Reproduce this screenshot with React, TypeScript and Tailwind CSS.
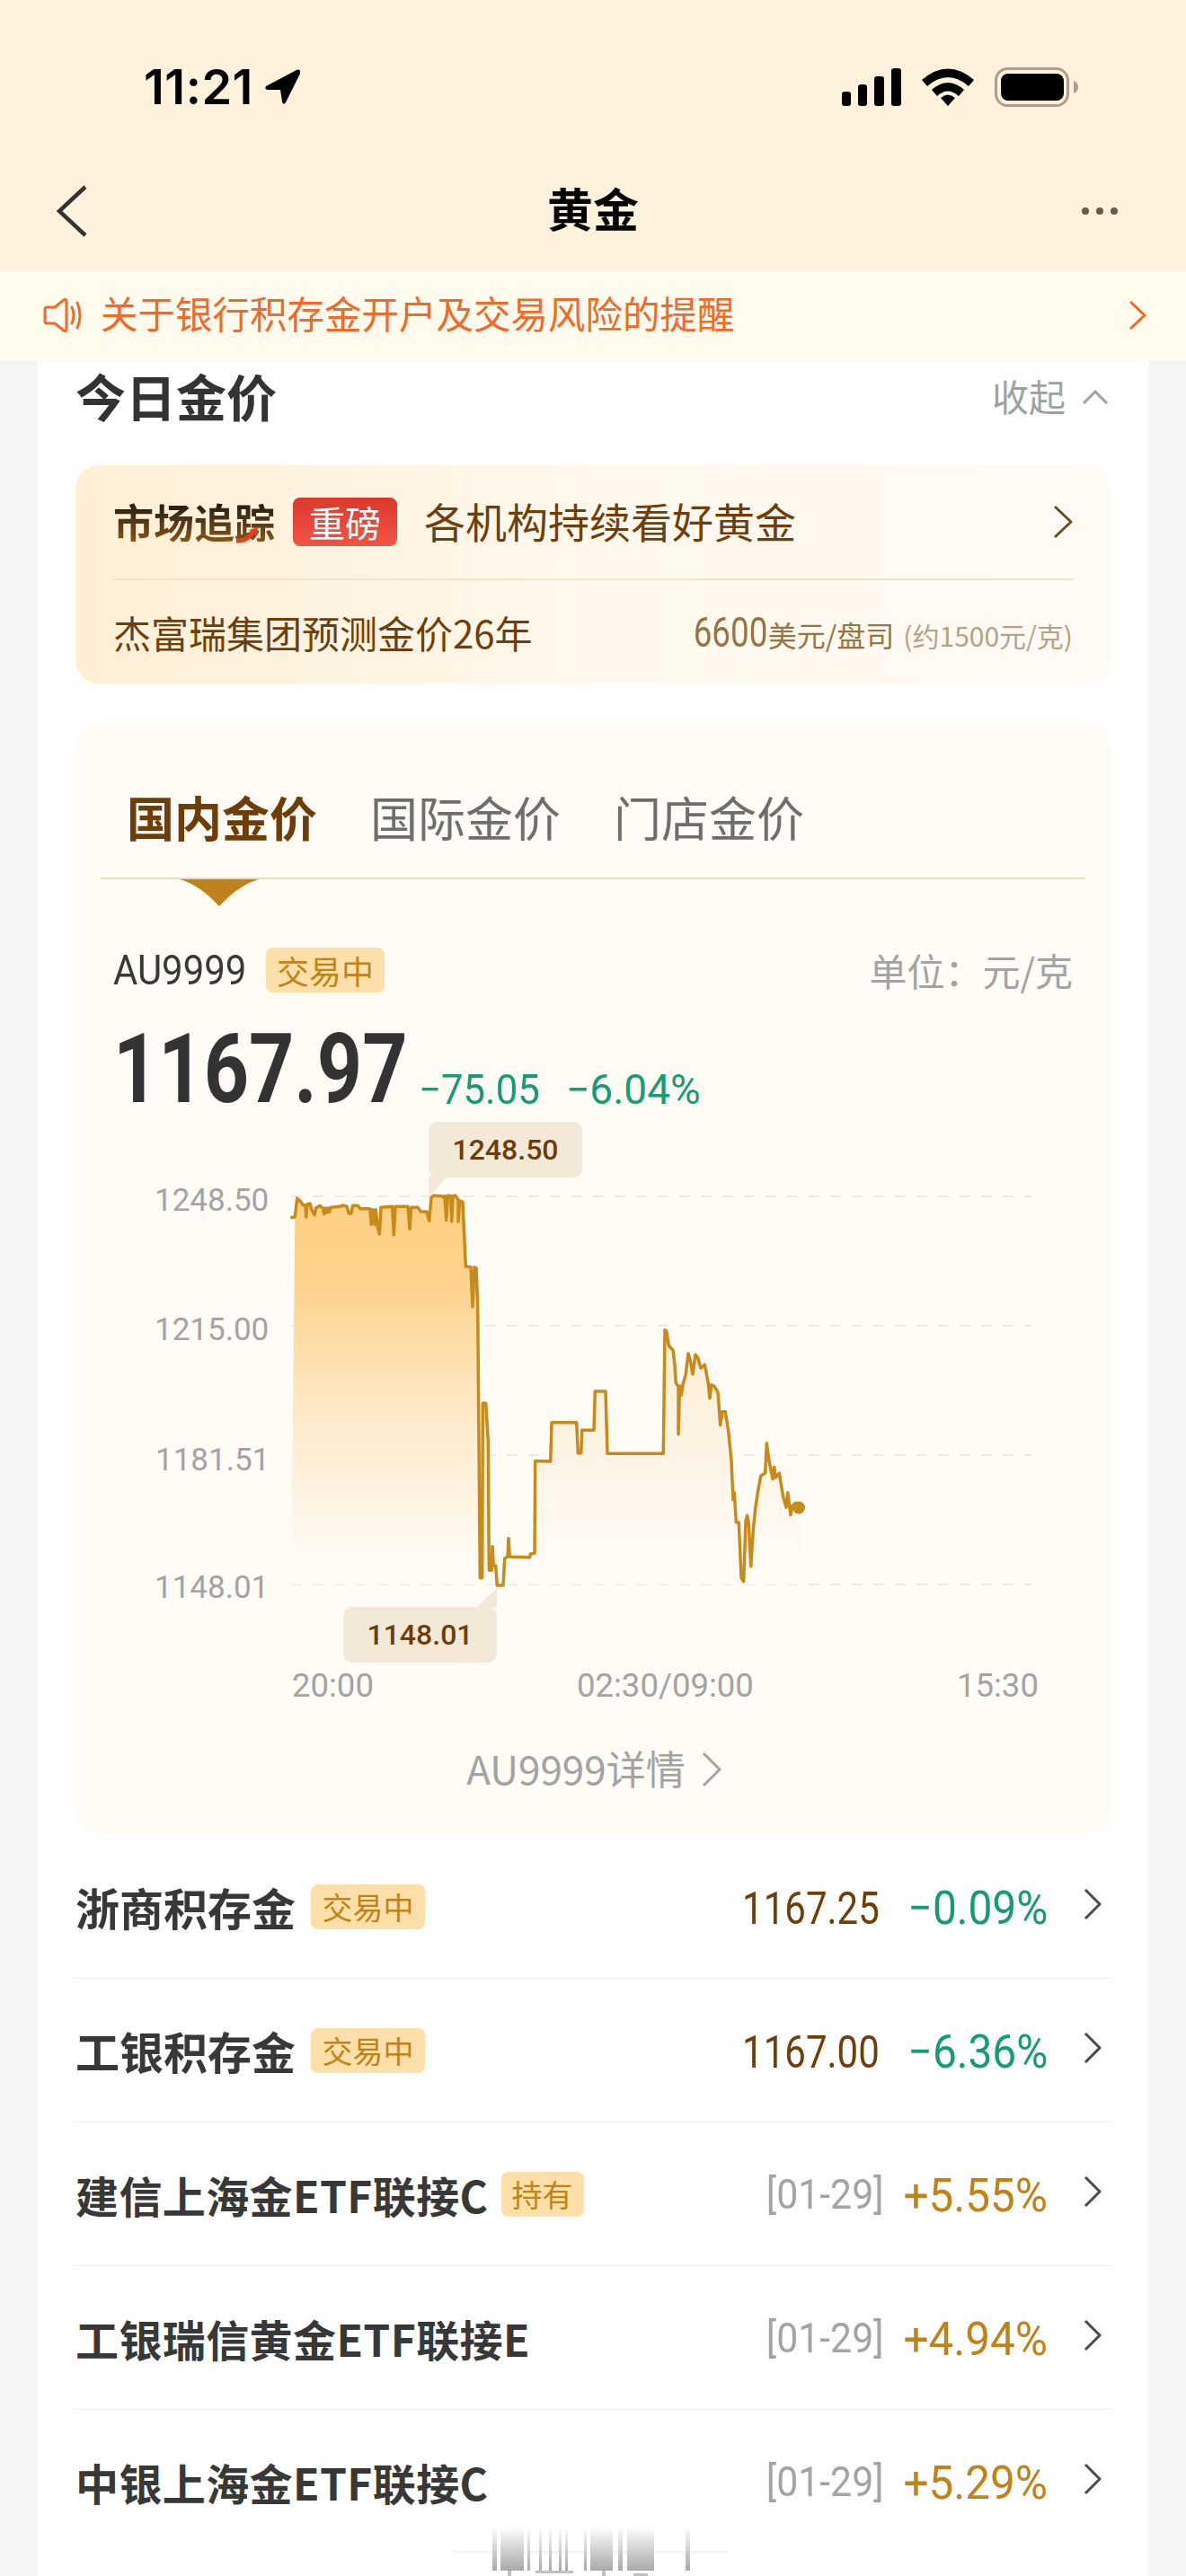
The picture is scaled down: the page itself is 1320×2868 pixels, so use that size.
import React from "react";

const cjk = "font-['Noto_Sans_CJK_SC','Noto_Sans',sans-serif]";
const num = "font-['Roboto','Noto_Sans_CJK_SC',sans-serif]";

const z5: number[][] = [[70,167],[85,165],[92,102],[105,115],[112,125],[120,125],[122,165],[126,122],[135,120],[140,140],[150,158],[155,135],[168,127],[178,135],[182,155],[186,135],[190,150],[195,135],[200,148],[205,133],[235,130],[245,126],[258,130],[265,153],[272,153],[278,127],[295,127],[303,137],[335,137],[340,190],[345,140],[352,190],[355,140],[360,195],[367,222],[372,133],[410,130],[415,225],[420,130],[462,130],[468,205],[473,133],[495,133],[505,147],[525,147],[533,178],[540,100],[548,93],[575,95],[582,100],[585,95],[590,175],[595,93],[605,95],[608,180],[612,95],[620,93],[630,108],[630,180],[635,110],[645,115],[655,330],[672,332],[678,465],[684,332],[690,335],[695,465]];
const z5b: number[][] = [[703,1370],[710,1370],[712,787],[722,787],[730,915],[733,1345],[742,1345],[744,1265],[748,1330],[755,1330],[760,1395],[780,1395],[785,1305],[795,1300],[798,1238],[802,1300],[868,1302],[872,1290],[885,1288],[887,980],[900,980]];
const z6: number[][] = [[38,561],[42,431],[125,431],[130,533],[140,533],[143,457],[183,457],[187,327],[222,327],[228,535],[415,535],[420,122],[425,125],[433,175],[447,190],[452,230],[457,300],[465,310],[465,470],[470,310],[475,340],[480,305],[490,270],[498,200],[505,225],[513,270],[522,205],[530,215],[540,250],[553,238],[565,300],[570,350],[575,305],[585,310],[597,330],[605,440],[612,395],[622,395],[632,460],[642,560],[648,690],[652,665],[658,765],[667,765],[675,950],[683,962],[690,760],[695,742],[700,770],[707,912],[715,790],[722,720],[730,665],[740,610],[755,600],[760,500],[768,560],[780,620],[785,580],[790,615],[802,600],[815,680],[825,715],[830,665],[840,740],[845,710],[857,700],[870,715]];

const fromZ5 = (p: number[]) => `${(300 + p[0] / 3).toFixed(1)},${(1300 + p[1] / 3).toFixed(1)}`;
const fromZ6 = (p: number[]) => `${(600 + p[0] / 3).toFixed(1)},${(1440 + p[1] / 3).toFixed(1)}`;
const partA = z5.map(fromZ5);
const partB = [...z5b.map(fromZ5), ...z6.map(fromZ6)];
const line = [...partA, ...partB].join(" ");
const areaA = `324,1764 ${partA.slice(1).join(" ")} 532,1764`;
const areaB = `535,1764 ${partB.join(" ")} 890,1764`;

function Chevron({ w = 20, h = 36, color = "#4a4a4a", sw = 3 }: { w?: number; h?: number; color?: string; sw?: number }) {
  return (
    <svg width={w} height={h} viewBox={`0 0 ${w} ${h}`} fill="none" className="shrink-0">
      <polyline points={`2,2 ${w - 2},${h / 2} 2,${h - 2}`} stroke={color} strokeWidth={sw} strokeLinejoin="round" />
    </svg>
  );
}

type RowData = { name: string; nameCls: string; tag?: string; tagCls?: string; left: string; right: string; color: string; date?: boolean };
const tagTrade = "ml-[17px] w-[127px]";
const rows: RowData[] = [
  { name: "浙商积存金", nameCls: "text-[49px]", tag: "交易中", tagCls: tagTrade, left: "1167.25", right: "−0.09%", color: "text-[#159c76] scale-x-[0.92]" },
  { name: "工银积存金", nameCls: "text-[49px]", tag: "交易中", tagCls: tagTrade, left: "1167.00", right: "−6.36%", color: "text-[#159c76] scale-x-[0.92]" },
  { name: "建信上海金ETF联接C", nameCls: "text-[48px] tracking-[0.4px]", tag: "持有", tagCls: "ml-[14px] w-[92px]", left: "[01-29]", right: "+5.55%", color: "text-[#c0831a] scale-x-[0.95]", date: true },
  { name: "工银瑞信黄金ETF联接E", nameCls: "text-[48px] tracking-[0.4px]", left: "[01-29]", right: "+4.94%", color: "text-[#c0831a] scale-x-[0.95]", date: true },
  { name: "中银上海金ETF联接C", nameCls: "text-[48px] tracking-[0.4px]", left: "[01-29]", right: "+5.29%", color: "text-[#c0831a] scale-x-[0.95]", date: true },
];

function Row({ r, last }: { r: RowData; last: boolean }) {
  return (
    <div className={`flex h-[160px] items-center ${last ? "" : "border-b border-[#efefef]"}`}>
      <span className={`${r.nameCls} font-bold leading-none text-[#383838]`}>{r.name}</span>
      {r.tag && (
        <span className={`${r.tagCls} flex h-[50px] items-center justify-center rounded-[8px] bg-[#fddfa9] text-[34px] leading-none text-[#c0831a]`}>
          {r.tag}
        </span>
      )}
      <span className="flex-1" />
      {r.date ? (
        <span className={`${num} mr-[-5px] inline-block origin-right scale-x-[0.93] text-[46px] leading-none text-[#a3a3a3]`}>{r.left}</span>
      ) : (
        <span className={`${num} mt-[5px] inline-block origin-right scale-x-[0.84] text-[50px] leading-none text-[#6e3f0c]`}>{r.left}</span>
      )}
      <span className="ml-[18px] mt-[4px] w-[160px] text-right">
        <span className={`${num} ${r.color} inline-block origin-right text-[52px] leading-none`}>{r.right}</span>
      </span>
      <span className="ml-[49px] mr-[10px] -mt-[6px]"><Chevron /></span>
    </div>
  );
}

export default function App() {
  return (
    <div className={`${cjk} relative h-[2868px] w-[1320px] overflow-hidden bg-[#f6f6f6]`}>
      {/* Header */}
      <div className="h-[302px] bg-[#fef2dd]">
        <div className="flex h-[194px] items-center justify-between pl-[160px] pr-[120px]">
          <div className="flex items-center">
            <span className="font-['Inter',sans-serif] text-[54px] font-semibold leading-none tracking-[0.5px] text-black">11:21</span>
            <svg width="42" height="42" viewBox="0 0 42 42" className="ml-[12px]">
              <path d="M2 20 L36 2 Q41 0 40 6 L24 38 Q21 42 20 37 L18 24 L4 24 Q0 23 2 20Z" fill="#000" />
            </svg>
          </div>
          <div className="flex items-center">
            <svg width="66" height="42" viewBox="0 0 66 42">
              <rect x="0" y="26" width="10" height="16" rx="3" fill="#000" />
              <rect x="18" y="18" width="10" height="24" rx="3" fill="#000" />
              <rect x="36" y="9" width="11" height="33" rx="3" fill="#000" />
              <rect x="55" y="0" width="11" height="42" rx="3" fill="#000" />
            </svg>
            <svg width="58" height="42" viewBox="0 0 58 42" className="ml-[23px]">
              <path d="M0 13 Q29 -12 58 13 L52 20 Q29 0 6 20Z" fill="#000" />
              <path d="M11 24 Q29 8 47 24 L41 31 Q29 20 17 31Z" fill="#000" />
              <path d="M21 33 Q29 26 37 33 L29 42Z" fill="#000" />
            </svg>
            <svg width="93" height="44" viewBox="0 0 93 44" className="ml-[23px]">
              <rect x="1.5" y="1.5" width="80" height="41" rx="13" fill="none" stroke="#a89f90" strokeWidth="3" />
              <rect x="7" y="7" width="70" height="30" rx="8" fill="#000" />
              <path d="M88 15 Q93 17 93 22 Q93 27 88 29Z" fill="#a89f90" />
            </svg>
          </div>
        </div>
        <div className="relative flex h-[82px] items-center justify-between pl-[63px] pr-[76px]">
          <svg width="34" height="58" viewBox="0 0 34 58" fill="none">
            <polyline points="32,2 3,29 32,56" stroke="#333" strokeWidth="4.5" />
          </svg>
          <span className="absolute left-0 right-0 -mt-[7px] text-center text-[51px] font-bold leading-none text-black">黄金</span>
          <svg width="40" height="10" viewBox="0 0 40 10">
            <circle cx="4" cy="5" r="4" fill="#6b5a4a" />
            <circle cx="20" cy="5" r="4" fill="#6b5a4a" />
            <circle cx="36" cy="5" r="4" fill="#6b5a4a" />
          </svg>
        </div>
      </div>

      {/* Notice */}
      <div className="flex h-[100px] items-center justify-between bg-[#fffcee] pl-[48px] pr-[44px]">
        <div className="flex items-center">
          <svg width="44" height="40" viewBox="0 0 44 40" fill="none" stroke="#f2692a" strokeWidth="3" className="-mt-[2px]">
            <path d="M2 13 Q2 11 5 11 L13 11 L23 3 Q26 1 26 5 L26 35 Q26 39 23 37 L13 29 L5 29 Q2 29 2 27Z" strokeLinejoin="round" />
            <path d="M32 11 Q36 20 32 29" strokeLinecap="round" />
            <path d="M38 6 Q44 20 38 34" strokeLinecap="round" />
          </svg>
          <span className="ml-[20px] -mt-[7px] text-[41.5px] leading-none text-[#f2692a]">关于银行积存金开户及交易风险的提醒</span>
        </div>
        <span className="-mt-[2px]"><Chevron w={20} h={34} color="#f2692a" /></span>
      </div>

      {/* Main card */}
      <div className="mx-[42px] h-[2466px] bg-white px-[42px]">
        <div className="flex h-[82px] items-center justify-between">
          <span className="-mt-[7px] text-[56px] font-bold leading-none text-[#333]">今日金价</span>
          <div className="flex items-center">
            <span className="-mt-[6px] text-[41px] leading-none text-[#a0a0a0]">收起</span>
            <svg width="30" height="18" viewBox="0 0 30 18" fill="none" className="ml-[18px] mr-[2px] -mt-[3px]">
              <polyline points="2,16 15,3 28,16" stroke="#a0a0a0" strokeWidth="3" />
            </svg>
          </div>
        </div>

        {/* Market tracking */}
        <div className="mt-[34px] h-[243px] rounded-[26px] bg-gradient-to-r from-[#feefd6] via-[#fff8ec] to-[#fffbf5] px-[42px]">
          <div className="flex h-[126px] items-center">
            <span className="relative -mt-[2px] w-[181px] whitespace-nowrap bg-gradient-to-b from-[#1f1a12] to-[#8a5410] bg-clip-text text-[45px] font-bold leading-none text-transparent">
              市场追踪
              <svg width="26" height="20" viewBox="0 0 26 20" fill="none" className="absolute left-[136px] top-[28px]">
                <path d="M1 16 Q14 17 20 5" stroke="#ec3c1a" strokeWidth="5" />
                <path d="M15 4 L25 1 L24 11Z" fill="#ec3c1a" />
              </svg>
            </span>
            <span className="ml-[19px] flex h-[54px] w-[116px] items-center justify-center rounded-[8px] bg-gradient-to-b from-[#dc382f] to-[#f25443] text-[40px] leading-none text-white">重磅</span>
            <span className="ml-[30px] -mt-[4px] flex-1 text-[46px] leading-none text-[#6e3f0c]">各机构持续看好黄金</span>
            <Chevron w={22} h={38} color="#6b4a2a" />
          </div>
          <div className="h-[2px] bg-[#f1e5c9]" />
          <div className="flex h-[115px] items-center justify-between">
            <span className="text-[42px] leading-none text-[#6e3f0c]">杰富瑞集团预测金价26年</span>
            <span className="flex items-baseline text-[#9a7344]">
              <span className={`${num} inline-block origin-right scale-x-[0.8] text-[46px] leading-none`}>6600</span>
              <span className="text-[32px] leading-none">美元/盘司</span>
              <span className="ml-[10px] text-[30px] leading-none text-[#b6a18a]">(约1500元/克)</span>
            </span>
          </div>
        </div>

        {/* Chart card */}
        <div className="mt-[44px] h-[1237px] rounded-[26px] bg-[#fffcf6] px-[28px]">
          <div className="flex h-[172px] items-end gap-[59px] pb-[41px] pl-[29px]">
            <span className="text-[53px] font-bold leading-none text-[#6e3d0a]">国内金价</span>
            <span className="text-[53px] leading-none text-[#6e6e6e]">国际金价</span>
            <span className="text-[53px] leading-none text-[#6e6e6e]">门店金价</span>
          </div>
          <div className="relative h-[2px] bg-[#eedcb8]">
            <svg width="88" height="30" viewBox="0 0 88 30" className="absolute left-[88px] top-[2px]">
              <path d="M0 0 L88 0 Q66 6 44 30 Q22 6 0 0Z" fill="#c0801a" />
            </svg>
          </div>
          <div className="flex h-[261px] flex-col px-[14px]">
            <div className="mt-[76px] flex h-[50px] items-center">
              <span className="w-[170px]">
                <span className={`${num} inline-block origin-left scale-x-[0.91] text-[46px] leading-none text-[#383838]`}>AU9999</span>
              </span>
              <span className="flex h-[50px] w-[132px] items-center justify-center rounded-[8px] bg-[#fddfa9] text-[36px] leading-none text-[#c0831a]">交易中</span>
              <span className="flex-1" />
              <span className="text-[42px] leading-none text-[#a3a3a3]">单位：元/克</span>
            </div>
            <div className="mt-[42px] flex items-end">
              <span className="w-[340px]">
                <span className={`${num} inline-block origin-left scale-x-[0.82] text-[107px] font-bold leading-[88px] text-[#333]`}>1167.97</span>
              </span>
              <span className="w-[164px]">
                <span className={`${num} inline-block origin-left scale-x-[0.95] text-[46px] leading-[44px] text-[#159c76]`}>−75.05</span>
              </span>
              <span className={`${num} text-[46px] leading-[44px] text-[#159c76]`}>−6.04%</span>
            </div>
          </div>

          {/* Chart */}
          <div className="relative -mx-[28px] h-[660px]">
            <svg width="1150" height="660" viewBox="84 1240 1150 660" className="block">
              <defs>
                <linearGradient id="ga" gradientUnits="userSpaceOnUse" x1="0" y1="1332" x2="0" y2="1745">
                  <stop offset="0" stopColor="#fdd084" />
                  <stop offset="0.22" stopColor="#fdd28a" />
                  <stop offset="0.6" stopColor="#fdeacb" />
                  <stop offset="1" stopColor="#fffcf6" />
                </linearGradient>
                <linearGradient id="gb" gradientUnits="userSpaceOnUse" x1="0" y1="1480" x2="0" y2="1745">
                  <stop offset="0" stopColor="#fdeed5" />
                  <stop offset="0.55" stopColor="#fdf4e6" />
                  <stop offset="1" stopColor="#fffcf6" />
                </linearGradient>
              </defs>
              {[1332, 1476, 1620, 1764].map((y) => (
                <line key={y} x1="324" x2="1148" y1={y} y2={y} stroke="#f0eadf" strokeWidth="2" strokeDasharray="12 12" />
              ))}
              <polygon points={areaB} fill="url(#gb)" />
              <polygon points={areaA} fill="url(#ga)" />
              <polyline points={line} fill="none" stroke="#c98a1c" strokeWidth="3.5" strokeLinejoin="round" />
              <circle cx="889" cy="1678.5" r="7" fill="#c98a1c" />
              <path d="M477 1310 L497 1310 L477 1334Z" fill="#f4e8d8" />
              <path d="M553 1790 L530 1790 L553 1768Z" fill="#f4e8d8" />
              <g fontFamily="Roboto, sans-serif" fontSize="35" fill="#a3a3a3">
                <text x="172" y="1348">1248.50</text>
                <text x="172" y="1492">1215.00</text>
                <text x="173" y="1637">1181.51</text>
                <text x="172" y="1779">1148.01</text>
              </g>
              <g fontFamily="Roboto, sans-serif" fontSize="36.5" fill="#a3a3a3">
                <text x="325" y="1889">20:00</text>
                <text x="642" y="1889">02:30/09:00</text>
                <text x="1065" y="1889">15:30</text>
              </g>
            </svg>
            <div className="absolute left-[393px] top-[9px] flex h-[62px] w-[171px] items-center justify-center rounded-[10px] bg-[#f4e8d8] font-['Roboto',sans-serif] text-[32px] font-medium leading-none text-[#6b3d0a]">1248.50</div>
            <div className="absolute left-[298px] top-[549px] flex h-[62px] w-[171px] items-center justify-center rounded-[10px] bg-[#f4e8d8] font-['Roboto',sans-serif] text-[32px] font-medium leading-none text-[#6b3d0a]">1148.01</div>
          </div>
          <div className="flex items-center justify-center pt-[42px] pl-[2px]">
            <span className="-mt-[4px] text-[44px] leading-[60px] text-[#a3a3a3]">AU9999详情</span>
            <span className="ml-[18px]"><Chevron w={22} h={40} color="#a3a3a3" /></span>
          </div>
        </div>

        {/* List */}
        <div className="mt-[1px]">
          {rows.map((r, i) => (
            <Row key={r.name} r={r} last={i === rows.length - 1} />
          ))}
        </div>
      </div>

      {/* Bottom watermark */}
      <svg width="360" height="56" viewBox="480 2812 360 56" className="absolute bottom-0 left-[480px]">
        <defs>
          <linearGradient id="wm" x1="0" y1="0" x2="0" y2="1">
            <stop offset="0" stopColor="#ffffff" />
            <stop offset="1" stopColor="#a8a8a8" />
          </linearGradient>
        </defs>
        <rect x="505" y="2840" width="305" height="3" fill="#f5f5f5" />
        {[[548,5],[557,26],[587,3],[600,3],[611,3],[622,3],[629,3],[650,3],[657,25],[688,5],[698,30],[763,5]].map(([x, w]) => (
          <rect key={x} x={x} y="2813" width={w} height="49" fill="url(#wm)" />
        ))}
        <rect x="565" y="2862" width="4" height="6" fill="#c0c0c0" />
        <rect x="596" y="2862" width="42" height="3" fill="#c0c0c0" />
        <rect x="670" y="2862" width="4" height="6" fill="#c0c0c0" />
        <rect x="705" y="2865" width="16" height="3" fill="#c0c0c0" />
      </svg>
    </div>
  );
}
